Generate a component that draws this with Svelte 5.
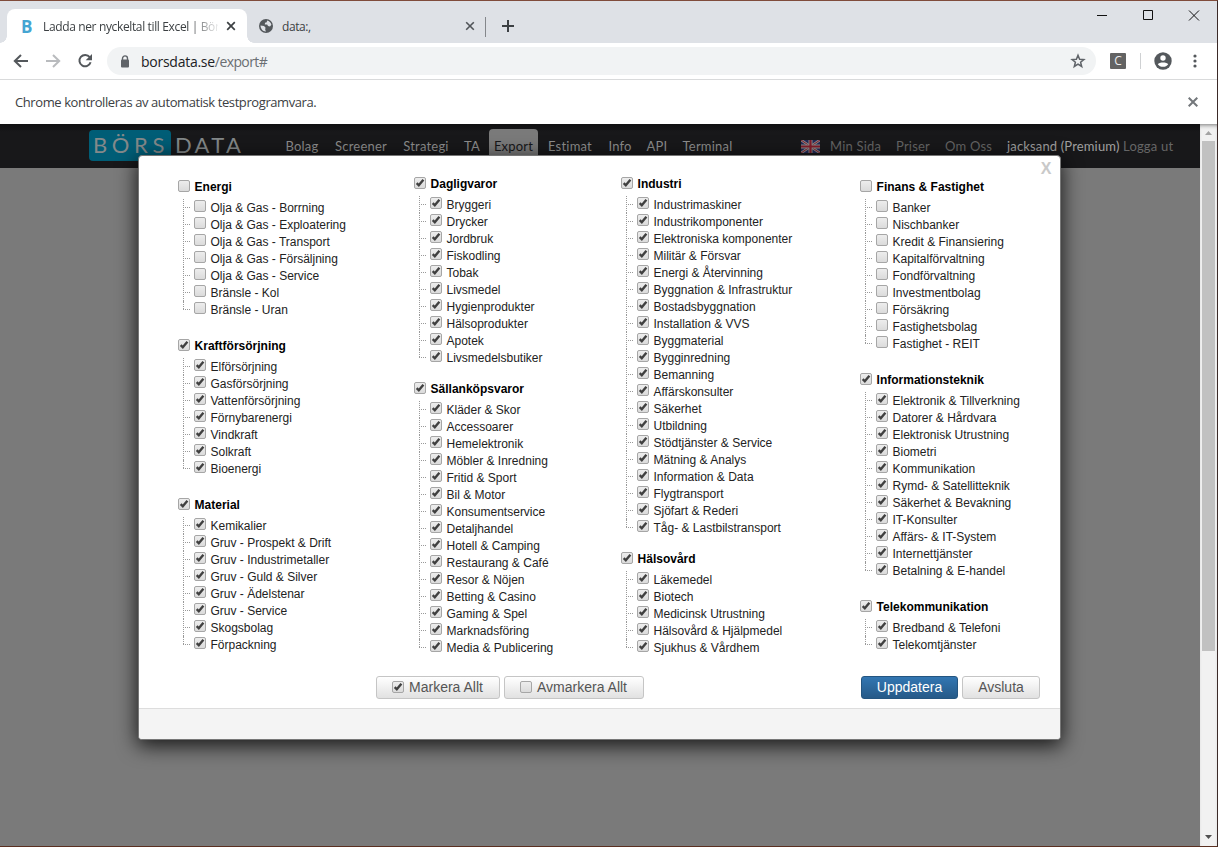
<script>
  const columns = [
    { gap: 16, groups: [
      { name: 'Energi', on: false, items: ['Olja & Gas - Borrning', 'Olja & Gas - Exploatering', 'Olja & Gas - Transport', 'Olja & Gas - Försäljning', 'Olja & Gas - Service', 'Bränsle - Kol', 'Bränsle - Uran'] },
      { name: 'Kraftförsörjning', on: true, items: ['Elförsörjning', 'Gasförsörjning', 'Vattenförsörjning', 'Förnybarenergi', 'Vindkraft', 'Solkraft', 'Bioenergi'] },
      { name: 'Material', on: true, items: ['Kemikalier', 'Gruv - Prospekt & Drift', 'Gruv - Industrimetaller', 'Gruv - Guld & Silver', 'Gruv - Ädelstenar', 'Gruv - Service', 'Skogsbolag', 'Förpackning'] }
    ] },
    { gap: 11, groups: [
      { name: 'Dagligvaror', on: true, items: ['Bryggeri', 'Drycker', 'Jordbruk', 'Fiskodling', 'Tobak', 'Livsmedel', 'Hygienprodukter', 'Hälsoprodukter', 'Apotek', 'Livsmedelsbutiker'] },
      { name: 'Sällanköpsvaror', on: true, items: ['Kläder & Skor', 'Accessoarer', 'Hemelektronik', 'Möbler & Inredning', 'Fritid & Sport', 'Bil & Motor', 'Konsumentservice', 'Detaljhandel', 'Hotell & Camping', 'Restaurang & Café', 'Resor & Nöjen', 'Betting & Casino', 'Gaming & Spel', 'Marknadsföring', 'Media & Publicering'] }
    ] },
    { gap: 11, groups: [
      { name: 'Industri', on: true, items: ['Industrimaskiner', 'Industrikomponenter', 'Elektroniska komponenter', 'Militär & Försvar', 'Energi & Återvinning', 'Byggnation & Infrastruktur', 'Bostadsbyggnation', 'Installation & VVS', 'Byggmaterial', 'Bygginredning', 'Bemanning', 'Affärskonsulter', 'Säkerhet', 'Utbildning', 'Stödtjänster & Service', 'Mätning & Analys', 'Information & Data', 'Flygtransport', 'Sjöfart & Rederi', 'Tåg- & Lastbilstransport'] },
      { name: 'Hälsovård', on: true, items: ['Läkemedel', 'Biotech', 'Medicinsk Utrustning', 'Hälsovård & Hjälpmedel', 'Sjukhus & Vårdhem'] }
    ] },
    { gap: 16, groups: [
      { name: 'Finans & Fastighet', on: false, items: ['Banker', 'Nischbanker', 'Kredit & Finansiering', 'Kapitalförvaltning', 'Fondförvaltning', 'Investmentbolag', 'Försäkring', 'Fastighetsbolag', 'Fastighet - REIT'] },
      { name: 'Informationsteknik', on: true, items: ['Elektronik & Tillverkning', 'Datorer & Hårdvara', 'Elektronisk Utrustning', 'Biometri', 'Kommunikation', 'Rymd- & Satellitteknik', 'Säkerhet & Bevakning', 'IT-Konsulter', 'Affärs- & IT-System', 'Internettjänster', 'Betalning & E-handel'] },
      { name: 'Telekommunikation', on: true, items: ['Bredband & Telefoni', 'Telekomtjänster'] }
    ] }
  ];
  const nav = [['Bolag', 50], ['Screener', 68], ['Strategi', 62], ['TA', 30], ['Export', 49], ['Estimat', 64], ['Info', 36], ['API', 38], ['Terminal', 63]];
</script>

{#snippet box(on)}
  <svg class="box" width="12" height="12" viewBox="0 0 12 12">
    <rect x=".5" y=".5" width="11" height="11" rx="1.5" fill="url(#boxfill)" stroke="#a6a6a6" />
    {#if on}<path d="M2.7 6.2 4.8 8.3 9.4 2.8" fill="none" stroke="#404040" stroke-width="2.4" />{/if}
  </svg>
{/snippet}

<svg class="defs" width="0" height="0"><defs><linearGradient id="boxfill" x2="0" y2="1"><stop offset="0" stop-color="#eee" /><stop offset="1" stop-color="#dadada" /></linearGradient></defs></svg>

<div class="window">
  <div class="tabs">
    <div class="tab active">
      <b class="fav">B</b><span class="title">Ladda ner nyckeltal till Excel | Bör</span>
      <svg width="10" height="10" viewBox="0 0 10 10"><path d="M1.2 1.2l7.6 7.6M8.8 1.2L1.2 8.8" stroke="#3c4043" stroke-width="1.7" /></svg>
    </div>
    <div class="tab second">
      <svg width="14" height="14" viewBox="0 0 14 14"><circle cx="7" cy="7" r="7" fill="#54585c" /><path d="M1.5 6.5 5 7l1.5 1.5-.3 2.2L7 12.4C4 12.6 1.6 10 1.5 6.5zM8 1.6c2.3.4 4 2 4.4 4.2L11 7.4 9 7 8.2 5.6 5.8 5.4 6 3.8l1.8-.5z" fill="#dee1e6" /></svg>
      <span>data:,</span>
      <svg width="10" height="10" viewBox="0 0 10 10"><path d="M1.2 1.2l7.6 7.6M8.8 1.2L1.2 8.8" stroke="#505458" stroke-width="1.6" /></svg>
    </div>
    <i class="sep"></i>
    <svg class="plus" width="12" height="12" viewBox="0 0 12 12"><path d="M6 0v12M0 6h12" stroke="#3c4043" stroke-width="2" /></svg>
    <svg class="wctl" width="103" height="12" viewBox="0 0 103 12"><path d="M0 5.5h10M46.5.5h9v9h-9zM92 .5l10 10M102 .5l-10 10" fill="none" stroke="#111" /></svg>
  </div>

  <div class="toolbar">
    <svg width="94" height="20" viewBox="0 0 94 20">
      <path d="M28 10H15M21 4l-6.2 6 6.2 6" fill="none" stroke="#54585c" stroke-width="2" />
      <path d="M46 10h13M53 4l6.2 6-6.2 6" fill="none" stroke="#b9bbbe" stroke-width="2" />
      <path d="M89.7 6.2A5.7 5.7 0 1 0 90.6 11.3" fill="none" stroke="#54585c" stroke-width="2" /><path d="M92 3v6.3h-6.3z" fill="#54585c" />
    </svg>
    <div class="address">
      <svg width="10" height="13" viewBox="0 0 10 13"><path d="M2.5 6V3.4a2.5 2.5 0 0 1 5 0V6" fill="none" stroke="#5f6368" stroke-width="1.4" /><rect x="1" y="4.5" width="8" height="8" rx="1" fill="#5f6368" /></svg>
      <span class="url">borsdata.se<em>/export#</em></span>
      <svg class="star" width="16" height="16" viewBox="0 0 16 16"><path d="M8 2.2l1.6 4 4.3.3-3.3 2.8 1.1 4.2L8 11.2l-3.7 2.3 1.1-4.2L2.1 6.5l4.3-.3z" fill="none" stroke="#5f6368" stroke-width="1.5" /></svg>
    </div>
    <span class="ext">C</span>
    <i class="tsep"></i>
    <svg width="18" height="18" viewBox="0 0 18 18"><circle cx="9" cy="9" r="8.7" fill="#54585c" /><circle cx="9" cy="6" r="2.7" fill="#fff" /><path d="M3.8 12.3C5 9.9 13 9.9 14.2 12.3 12.2 15.7 5.8 15.7 3.8 12.3z" fill="#fff" /></svg>
    <svg class="dots" width="4" height="14" viewBox="0 0 4 14" fill="#54585c"><circle cx="2" cy="2" r="1.6" /><circle cx="2" cy="7" r="1.6" /><circle cx="2" cy="12" r="1.6" /></svg>
  </div>

  <div class="info"><span>Chrome kontrolleras av automatisk testprogramvara.</span>
    <svg width="10" height="10" viewBox="0 0 10 10"><path d="M.7.7l8.6 8.6M9.3.7L.7 9.3" stroke="#73777b" stroke-width="2" /></svg>
  </div>

  <div class="view">
    <div class="page">
      <header>
        <div class="logo"><span class="bors">BÖRS</span><span class="data">DATA</span></div>
        <nav>{#each nav as [label, w]}<a class:sel={label === 'Export'} style="width:{w}px">{label}</a>{/each}</nav>
        <svg class="flag" width="19" height="13" viewBox="0 0 19 13"><path fill="#222957" d="M0 0h19v13H0z" /><path d="M0 0l19 13M19 0L0 13" stroke="#8c8c8c" stroke-width="2.6" /><path d="M0 0l19 13M19 0L0 13" stroke="#831d2b" /><path d="M9.5 0v13M0 6.5h19" stroke="#8c8c8c" stroke-width="4" /><path d="M9.5 0v13M0 6.5h19" stroke="#831d2b" stroke-width="2.2" /></svg>
        <div class="links"><a class="l1">Min Sida</a><a class="l2">Priser</a><a class="l3">Om Oss</a><a class="l4">jacksand (Premium)</a><a class="l5">Logga ut</a></div>
      </header>
    </div>
    <div class="scroll">
      <svg width="17" height="17" viewBox="0 0 17 17"><path d="M5 11h7L8.5 7z" fill="#a3a3a3" /></svg>
      <div class="thumb"></div>
      <svg class="down" width="17" height="17" viewBox="0 0 17 17"><path d="M5 6h7L8.5 10z" fill="#505050" /></svg>
    </div>
  </div>

  <div class="modal">
    <b class="x">X</b>
    <div class="content">
      <div class="cols">
        {#each columns as col, i}
          <div class="col c{i}" style="gap:{col.gap}px">
            {#each col.groups as g}
              <section>
                <div class="head">{@render box(g.on)}<b>{g.name}</b></div>
                <ul>{#each g.items as item}<li><i class="branch"></i>{@render box(g.on)}<span>{item}</span></li>{/each}</ul>
              </section>
            {/each}
          </div>
        {/each}
      </div>
      <div class="buttons">
        <button class="mark">{@render box(true)}<span>Markera Allt</span></button>
        <button class="unmark">{@render box(false)}<span>Avmarkera Allt</span></button>
        <button class="update"><span>Uppdatera</span></button>
        <button class="end"><span>Avsluta</span></button>
      </div>
    </div>
    <footer></footer>
  </div>
</div>

<style>
  :global(body) { background: #fff; }
  .window { position: relative; box-sizing: border-box; width: 1218px; height: 847px; display: flex; flex-direction: column; border: solid #3b2a28; border-width: 1px 1px 1px 0; border-top-color: #804c3b; border-bottom-color: #5b3021; overflow: hidden; background: #fff; font-family: "Open Sans", sans-serif; }
  svg { flex: none; display: block; }
  .defs { position: absolute; }
  .tabs { height: 42px; flex: none; background: #dee1e6; display: flex; align-items: flex-end; font-size: 12px; color: #3c4043; }
  .tab { display: flex; align-items: center; height: 34px; box-sizing: border-box; white-space: nowrap; }
  .active { position: relative; margin-left: 7px; width: 240px; background: #fff; border-radius: 8px 8px 0 0; padding-left: 14px; }
  .active::before, .active::after { content: ""; position: absolute; bottom: 0; width: 7px; height: 7px; }
  .active::before { left: -7px; background: radial-gradient(circle at 0 0, #dee1e6 6.5px, #fff 7px); }
  .active::after { right: -7px; background: radial-gradient(circle at 100% 0, #dee1e6 6.5px, #fff 7px); }
  .fav { width: 22px; color: #45a5d2; font: bold 17px "Open Sans"; }
  .title { width: 175px; margin-right: 8px; letter-spacing: -.36px; -webkit-mask-image: linear-gradient(90deg, #000 145px, transparent 178px); mask-image: linear-gradient(90deg, #000 145px, transparent 178px); }
  .second { width: 238px; padding-left: 12px; }
  .second span { width: 183px; margin-left: 9px; letter-spacing: -.4px; }
  .sep { width: 1px; height: 20px; background: #84878b; margin-bottom: 6px; }
  .plus { margin: 0 0 11px 16px; }
  .wctl { margin: 0 17px 21px auto; }
  .toolbar { height: 36px; flex: none; display: flex; align-items: center; border-bottom: 1px solid #d9dadb; }
  .address { margin-left: 13px; width: 989px; height: 28px; box-sizing: border-box; border-radius: 14px; background: #f1f3f4; display: flex; align-items: center; padding: 0 10px 0 13px; }
  .url { margin-left: 11px; font-size: 14px; letter-spacing: -.5px; color: #202124; }
  .url { letter-spacing: -.26px; }
  .url em { font-style: normal; letter-spacing: -.6px; color: #6a6e72; }
  .star { margin-left: auto; }
  .ext { margin-left: 14px; width: 16px; height: 16px; border-radius: 1px; background: #636363; color: #eee; font-size: 12px; line-height: 16px; text-align: center; }
  .tsep { width: 1px; height: 16px; background: #cfd1d3; margin: 0 13px 0 14px; }
  .dots { margin-left: 21px; }
  .info { height: 44px; flex: none; display: flex; align-items: center; justify-content: space-between; padding: 0 19px 0 15px; font-size: 13px; letter-spacing: -.41px; color: #3c4043; }
  .view { flex: 1; display: flex; min-height: 0; }
  .page { flex: 1; background: #7a7a7a; }
  .scroll { width: 17px; display: flex; flex-direction: column; background: #f1f1f1; box-shadow: inset 0 4px 4px -3px #777; }
  .thumb { height: 510px; width: 13px; margin-left: 2px; background: #c1c1c1; }
  .down { margin-top: auto; }
  header { height: 44px; background: linear-gradient(#101011, #18181a 8px); display: flex; align-items: flex-start; box-sizing: border-box; padding-left: 89px; color: #8d8d8d; font: 13px Lato, sans-serif; white-space: nowrap; }
  .logo { display: flex; margin-top: 6px; width: 188px; height: 31px; line-height: 30px; font-family: Lato, sans-serif; font-size: 22px; color: #84898a; }
  .bors { width: 82px; box-sizing: border-box; padding-left: 4px; background: #005d76; border-radius: 4px; letter-spacing: 4.6px; }
  .data { padding-left: 4px; letter-spacing: 3.3px; }
  nav { display: flex; }
  nav a { text-align: center; line-height: 34px; height: 39px; margin-top: 5px; letter-spacing: .2px; }
  nav a.sel { background: #7a7a7a; color: #171719; border-radius: 4px 4px 0 0; margin-left: 2px; }
  .flag { margin: 16px 0 0 62px; }
  .links { display: flex; line-height: 44px; color: #666; letter-spacing: .2px; }
  .l1 { margin-left: 10px; width: 66px; }
  .l2 { width: 49px; }
  .l3 { width: 62px; }
  .l4 { width: 116px; color: #a0a0a0; letter-spacing: .15px; }
  .modal { position: absolute; left: 138px; top: 154px; width: 923px; height: 585px; box-sizing: border-box; display: flex; flex-direction: column; border: 1px solid #777; border-radius: 4px; background: #fff; box-shadow: 0 5px 20px 1px #000c; font-family: "Liberation Sans", Arial, sans-serif; }
  .x { position: absolute; right: 8.5px; top: 3px; font-size: 16px; line-height: 20px; color: #c9c9c9; }
  .content { flex: 1; }
  .cols { height: 520px; display: grid; grid-template-columns: 236px 207px 239px 180px; padding-left: 39px; }
  .col { display: flex; flex-direction: column; padding-top: 19px; }
  .c1, .c2 { padding-top: 16px; }
  .head { height: 24px; display: flex; align-items: center; gap: 4.6px; font-size: 12px; color: #000; }
  .head .box { margin-bottom: 2px; }
  ul { margin: 0; padding: 0 0 0 5px; list-style: none; }
  li { display: flex; height: 17px; font-size: 12px; line-height: 19px; color: #222; white-space: nowrap; }
  .branch { width: 7px; height: 8px; margin-right: 4px; border-bottom: 1px dotted #999; position: relative; }
  .branch::before { content: ""; position: absolute; left: 0; top: 0; height: 17px; border-left: 1px dotted #999; }
  li:last-child .branch::before { height: 8px; }
  li .box { margin-top: 1px; margin-right: 4.5px; }
  .buttons { display: flex; padding-left: 237px; }
  button { height: 23px; box-sizing: border-box; display: flex; align-items: center; justify-content: center; gap: 5px; margin: 0; padding: 0 0 2px; border: 1px solid #c5c5c5; border-radius: 3px; background: linear-gradient(#fff, #e1e1e1); color: #555; font: 14px "Liberation Sans", Arial, sans-serif; white-space: nowrap; }
  .mark { width: 124px; }
  .unmark { width: 140px; margin-left: 4px; }
  .mark, .unmark { padding-right: 1px; }
  .update { width: 97px; margin-left: 217px; background: linear-gradient(#3276b2, #265a88); border-color: #245580; color: #fff; }
  .end { width: 78px; margin-left: 4px; }
  footer { height: 30px; background: #f4f4f4; border-top: 1px solid #ddd; border-radius: 0 0 3px 3px; }
</style>
